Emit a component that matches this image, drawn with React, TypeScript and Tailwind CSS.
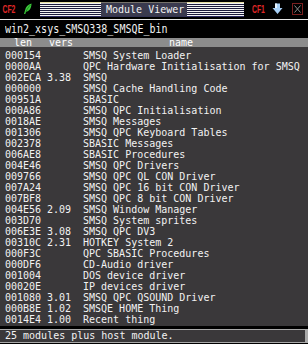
import React from 'react';

type Row = { len: string; vers: string; name: string };

const rows: Row[] = [
    { len: "000154", vers: "", name: "SMSQ System Loader" },
    { len: "0000AA", vers: "", name: "QPC Hardware Initialisation for SMSQ" },
    { len: "002ECA", vers: "3.38", name: "SMSQ" },
    { len: "000000", vers: "", name: "SMSQ Cache Handling Code" },
    { len: "00951A", vers: "", name: "SBASIC" },
    { len: "000A86", vers: "", name: "SMSQ QPC Initialisation" },
    { len: "0018AE", vers: "", name: "SMSQ Messages" },
    { len: "001306", vers: "", name: "SMSQ QPC Keyboard Tables" },
    { len: "002378", vers: "", name: "SBASIC Messages" },
    { len: "006AE8", vers: "", name: "SBASIC Procedures" },
    { len: "004E46", vers: "", name: "SMSQ QPC Drivers" },
    { len: "009766", vers: "", name: "SMSQ QPC QL CON Driver" },
    { len: "007A24", vers: "", name: "SMSQ QPC 16 bit CON Driver" },
    { len: "007BF8", vers: "", name: "SMSQ QPC 8 bit CON Driver" },
    { len: "004E56", vers: "2.09", name: "SMSQ Window Manager" },
    { len: "003D70", vers: "", name: "SMSQ System sprites" },
    { len: "006E3E", vers: "3.08", name: "SMSQ QPC DV3" },
    { len: "00310C", vers: "2.31", name: "HOTKEY System 2" },
    { len: "000F3C", vers: "", name: "QPC SBASIC Procedures" },
    { len: "000DF6", vers: "", name: "CD-Audio driver" },
    { len: "001004", vers: "", name: "DOS device driver" },
    { len: "00020E", vers: "", name: "IP devices driver" },
    { len: "001080", vers: "3.01", name: "SMSQ QPC QSOUND Driver" },
    { len: "000B8E", vers: "1.02", name: "SMSQE HOME Thing" },
    { len: "0014E4", vers: "1.00", name: "Recent thing" },
];

// striped filler either side of the window title
const Stripes = ({ w }: { w: string }) => (
    <div className={`${w} h-full bg-[repeating-linear-gradient(to_bottom,#f4f4f4_0px,#f4f4f4_1px,#1c1c3c_1px,#1c1c3c_2px)]`} />
);

export default function App() {
    return (
        <div className="w-[308px] h-[344px] bg-black flex flex-col overflow-hidden text-[#f2f2f2] font-['DejaVu_Sans_Mono',monospace] text-[10px]">
            {/* title bar */}
            <div className="h-[19px] flex items-start pt-[2px]">
                <span className="w-[20px] pl-[4px] pt-[2px] text-[#e02828] font-bold text-[11px] leading-[11px] scale-x-[0.62] origin-left font-['Liberation_Sans',sans-serif]">CF2</span>
                <svg width="10" height="12" viewBox="0 0 10 12" className="ml-[3px] mt-[1px]">
                    <path d="M8.5 0.5 C5 1.5 2.5 4 2 7.5 L1 11 L2.3 11 L3 8.8 C6 8.5 8.5 5.5 8.5 0.5 Z" fill="#3ccc3c" />
                    <path d="M7.5 2 C5.5 4 4 6 3 8.8" stroke="#1d7a1d" strokeWidth="0.8" fill="none" />
                </svg>
                <div className="ml-[7px] h-[15px] w-[204px] border-t border-[#e4dca0] border-b border-b-[#2a2a60] flex">
                    <Stripes w="w-[61px]" />
                    <div className="w-[86px] h-full bg-[#3a3a4e] flex items-center pl-[5px] leading-[13px] text-[10px] scale-y-110">Module Viewer</div>
                    <Stripes w="w-[57px]" />
                </div>
                <span className="ml-[8px] pt-[2px] w-[20px] text-[#e02828] font-bold text-[11px] leading-[11px] scale-x-[0.62] origin-left font-['Liberation_Sans',sans-serif]">CF1</span>
                <svg width="11" height="12" viewBox="0 0 11 12" className="mt-[1px]">
                    <path d="M3 0.5 H8 V5 H10.5 L5.5 11 L0.5 5 H3 Z" fill="#a6cff6" />
                    <path d="M3 0.5 H5 V5 H3 Z" fill="#e8f4ff" />
                </svg>
                <div className="ml-[9px] mt-[1px] w-[11px] h-[12px] border border-[#7a2020] flex items-center justify-center">
                    <svg width="7" height="8" viewBox="0 0 7 8">
                        <path d="M0.5 0.5 L6.5 7.5 M6.5 0.5 L0.5 7.5" stroke="#8a8a8a" strokeWidth="1" />
                    </svg>
                </div>
            </div>

            {/* file name */}
            <div className="h-[19px] border-t border-[#e8e8e8] flex items-center pl-[5px]">
                <span className="scale-y-[1.3] origin-center leading-[12px]">win2_xsys_SMSQ338_SMSQE_bin</span>
            </div>

            {/* column header */}
            <div className="h-[9px] bg-[#8c8c8c] flex leading-[9px] text-white">
                <span className="w-[49px] pl-[14px]">len</span>
                <span className="w-[120px]">vers</span>
                <span>name</span>
            </div>

            {/* module list */}
            <div className="h-[279px] bg-[#3a383a] pt-[3px]">
                {rows.map((r) => (
                    <div key={r.len} className="h-[11px] leading-[11px] flex whitespace-pre pl-[5px]">
                        <span className="w-[42px]">{r.len}</span>
                        <span className="w-[36px]">{r.vers}</span>
                        <span>{r.name}</span>
                    </div>
                ))}
            </div>

            {/* status */}
            <div className="mt-[3px] h-[14px] border-y border-[#a8a8a8] border-r-[3px] border-r-[#a8a8a8] bg-[#3a383a] flex items-center pl-[5px] leading-[12px]">
                25 modules plus host module.
            </div>
        </div>
    );
}
